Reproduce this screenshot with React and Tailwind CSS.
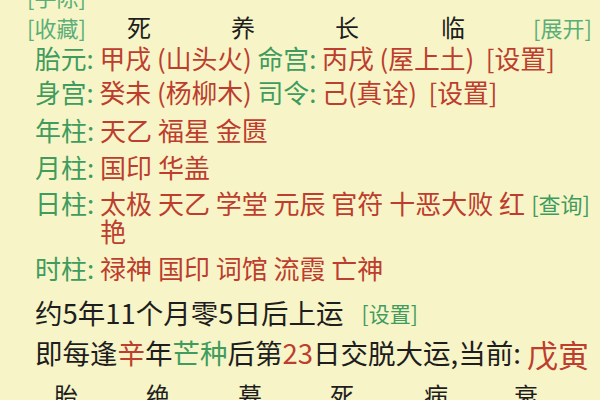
import React from "react";

const F = { fontFamily: '"Noto Sans CJK SC", "Noto Sans", sans-serif' };

function G({ children, className = "" }) {
  return <span className={`text-[#3f9c5e] ${className}`}>{children}</span>;
}
function R({ children, className = "" }) {
  return <span className={`text-[#bd3d2e] ${className}`}>{children}</span>;
}

export default function App() {
  return (
    <div
      className="w-[600px] h-[400px] overflow-hidden bg-[#f7f5c7] text-[#1e1e1e]"
      style={F}
    >
      <div className="flex flex-col mt-[-19px]">
        {/* clipped top row */}
        <div className="h-[30px] flex items-center pl-[27px] text-[22px] leading-none">
          <G className="text-[#5aae78]">[手陈]</G>
        </div>
        {/* 收藏 row */}
        <div className="h-[31px] flex items-center pl-[27px] text-[22px] leading-none">
          <G className="text-[#5aae78] w-[60px]">[收藏]</G>
          <div className="flex text-[24px]">
            <span className="ml-[40px]">死</span>
            <span className="ml-[80px]">养</span>
            <span className="ml-[80px]">长</span>
            <span className="ml-[82px]">临</span>
          </div>
          <G className="text-[#5aae78] ml-[68px]">[展开]</G>
        </div>
        {/* 胎元 */}
        <div className="h-[31px] flex items-center pl-[35px] text-[25.8px] leading-none whitespace-pre">
          <G>胎元: </G>
          <R>甲戌 (山头火) </R>
          <G>命宫: </G>
          <R>丙戌 (屋上土)  [设置]</R>
        </div>
        {/* 身宫 */}
        <div className="h-[38px] flex items-center pl-[35px] text-[25.8px] leading-none whitespace-pre">
          <G>身宫: </G>
          <R>癸未 (杨柳木) </R>
          <G>司令: </G>
          <R>己(真诠)  [设置]</R>
        </div>
        {/* 年柱 */}
        <div className="h-[38px] flex items-center pl-[35px] text-[26px] leading-none whitespace-pre">
          <G>年柱: </G>
          <R>天乙 福星 金匮</R>
        </div>
        {/* 月柱 */}
        <div className="h-[36px] flex items-center pl-[35px] text-[26px] leading-none whitespace-pre">
          <G>月柱: </G>
          <R>国印 华盖</R>
        </div>
        {/* 日柱 */}
        <div className="h-[64px] flex pt-[4px] pl-[35px] pr-[10px] text-[26px] leading-[28px] whitespace-pre">
          <G>日柱: </G>
          <div className="flex-1 flex flex-col">
            <R>太极 天乙 学堂 元辰 官符 十恶大败 红</R>
            <R>艳</R>
          </div>
          <G className="text-[22px]">[查询]</G>
        </div>
        {/* 时柱 */}
        <div className="h-[38px] flex items-center pl-[35px] text-[26px] leading-none whitespace-pre">
          <G>时柱: </G>
          <R>禄神 国印 词馆 流霞 亡神</R>
        </div>
        {/* 约 */}
        <div className="h-[52px] flex items-center pl-[35px] text-[27.5px] leading-none whitespace-pre">
          <span>约5年11个月零5日后上运</span>
          <G className="text-[21px] ml-[18px]">[设置]</G>
        </div>
        {/* 即 */}
        <div className="h-[28px] flex items-center pl-[35px] text-[27.5px] leading-none whitespace-pre">
          <span>即每逢</span>
          <R>辛</R>
          <span>年</span>
          <G>芒种</G>
          <span>后第</span>
          <R>23</R>
          <span>日交脱大运,当前: </span>
          <R className="text-[31px]">戊寅</R>
        </div>
        {/* bottom row */}
        <div className="h-[56px] flex items-center pl-[54px] text-[24px] leading-none">
          <span>胎</span>
          <span className="ml-[68px]">绝</span>
          <span className="ml-[68px]">墓</span>
          <span className="ml-[68px]">死</span>
          <span className="ml-[70px]">病</span>
          <span className="ml-[66px]">衰</span>
        </div>
      </div>
    </div>
  );
}
